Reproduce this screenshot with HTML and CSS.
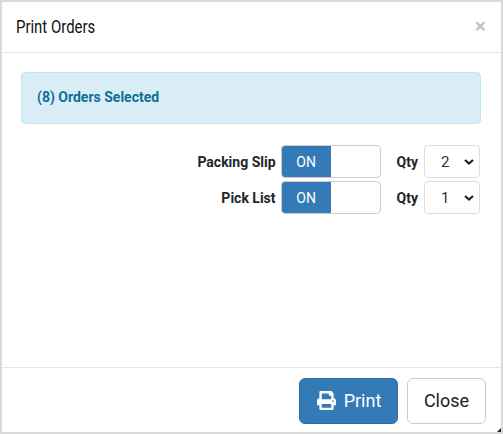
FILE: index.html
```html
<!DOCTYPE html>
<html>
	<head>
		<meta charset="utf-8">
		<title>Print Orders</title>
		<link rel="stylesheet" href="styles.css">
	</head>
	<body>
		<div class="modal">
			<div class="modal-header">
				<span class="modal-title">Print Orders</span>
				<span class="modal-close">&times;</span>
			</div>
			<div class="modal-body">
				<div class="alert">(8) Orders Selected</div>
				<div class="print-rows">
					<div class="print-row">
						<span class="print-label">Packing Slip</span>
						<div class="toggle"><span class="toggle-on">ON</span></div>
						<span class="qty-label">Qty</span>
						<div class="qty-select">
							<span>2</span>
							<svg class="chevron" viewBox="0 0 10 6"><path d="M1 1l4 3.500L9 1" /></svg>
						</div>
					</div>
					<div class="print-row">
						<span class="print-label">Pick List</span>
						<div class="toggle"><span class="toggle-on">ON</span></div>
						<span class="qty-label">Qty</span>
						<div class="qty-select">
							<span>1</span>
							<svg class="chevron" viewBox="0 0 10 6"><path d="M1 1l4 3.500L9 1" /></svg>
						</div>
					</div>
				</div>
			</div>
			<div class="modal-footer">
				<button class="btn btn-primary">
					<svg class="print-icon" viewBox="0 0 512 512"><path d="M448 192V77.250c0-8.490-3.370-16.620-9.370-22.630L393.370 9.370c-6-6-14.140-9.370-22.630-9.370H96C78.330 0 64 14.330 64 32v160c-35.350 0-64 28.650-64 64v112c0 8.840 7.160 16 16 16h48v96c0 17.670 14.330 32 32 32h320c17.670 0 32-14.330 32-32v-96h48c8.840 0 16-7.160 16-16V256c0-35.350-28.650-64-64-64zm-64 256H128v-96h256v96zm0-224H128V64h192v48c0 8.840 7.160 16 16 16h48v96zm48 72c-13.250 0-24-10.750-24-24 0-13.260 10.750-24 24-24s24 10.740 24 24c0 13.250-10.750 24-24 24z" /></svg>
					Print
				</button>
				<button class="btn btn-default">Close</button>
			</div>
			<span class="resize-grip"></span>
		</div>
	</body>
</html>
```

FILE: styles.css
```css
html, body {
	height: 100%;
}
body {
	margin: 0;
	background-color: #d9d9d9;
	font-family: Roboto, 'Liberation Sans', sans-serif;
	color: #212529;
}
.modal {
	position: relative;
	box-sizing: border-box;
	height: 430px;
	margin: 2px;
	background-color: #fff;
	display: flex;
	flex-direction: column;
}
.modal-header {
	height: 51px;
	box-sizing: border-box;
	border-bottom: 1px solid #e5e5e5;
	display: flex;
	align-items: center;
	justify-content: space-between;
	padding: 0 15px 2px 14px;
}
.modal-title {
	display: inline-block;
	font-size: 18px;
	color: #111;
	transform: scaleX(0.83);
	transform-origin: left center;
}
.modal-close {
	font-size: 21px;
	font-weight: 700;
	color: #c4c4c4;
	line-height: 1;
}
.modal-body {
	flex: 1;
	padding: 19px 20px 0 19px;
}
.alert {
	box-sizing: border-box;
	height: 52px;
	background-color: #d9edf7;
	border: 1px solid #bce8f1;
	border-radius: 4px;
	padding: 0 15px 2px;
	display: flex;
	align-items: center;
	font-size: 14px;
	font-weight: 700;
	color: #0f6d9a;
}
.print-rows {
	margin-top: 21px;
	padding-right: 1px;
	display: flex;
	flex-direction: column;
	gap: 3px;
}
.print-row {
	display: flex;
	align-items: center;
	justify-content: flex-end;
	font-size: 14px;
	font-weight: 700;
}
.print-label {
	margin-right: 5px;
}
.toggle {
	box-sizing: border-box;
	width: 100px;
	height: 33px;
	border: 1px solid #ccc;
	border-radius: 4px;
	overflow: hidden;
	display: flex;
}
.toggle-on {
	box-sizing: border-box;
	width: 50px;
	margin: -1px 0 -1px -1px;
	padding-left: 1px;
	background-color: #337ab7;
	color: #fff;
	font-weight: 400;
	display: flex;
	align-items: center;
	justify-content: center;
}
.qty-label {
	margin: 0 6px 0 16px;
}
.qty-select {
	box-sizing: border-box;
	width: 56px;
	height: 33px;
	border: 1px solid #ddd;
	border-radius: 4px;
	display: flex;
	align-items: center;
	padding: 0 5px 0 16px;
	justify-content: space-between;
	font-weight: 400;
	color: #333;
	font-size: 15px;
}
.chevron {
	width: 10px;
	height: 6px;
	fill: none;
	stroke: #222;
	stroke-width: 2.200;
}
.modal-footer {
	height: 65px;
	box-sizing: border-box;
	border-top: 1px solid #e5e5e5;
	display: flex;
	align-items: center;
	justify-content: flex-end;
	gap: 9px;
	padding: 2px 15px 0 0;
}
.btn {
	box-sizing: border-box;
	height: 46px;
	padding: 0 0 2px;
	border-radius: 6px;
	font-family: inherit;
	font-size: 18px;
	display: flex;
	align-items: center;
	justify-content: center;
}
.btn-primary {
	width: 99px;
	padding-left: 1px;
	background-color: #337ab7;
	border: 1px solid #2e6da4;
	color: #fff;
	gap: 8px;
}
.btn-default {
	width: 79px;
	background-color: #fff;
	border: 1px solid #ccc;
	color: #222;
}
.print-icon {
	width: 19px;
	height: 19px;
	fill: #fff;
}
.resize-grip {
	position: absolute;
	right: 0;
	bottom: 0;
	width: 4px;
	height: 4px;
	background-color: #222;
	clip-path: polygon(100% 0, 100% 100%, 0 100%);
}
```
